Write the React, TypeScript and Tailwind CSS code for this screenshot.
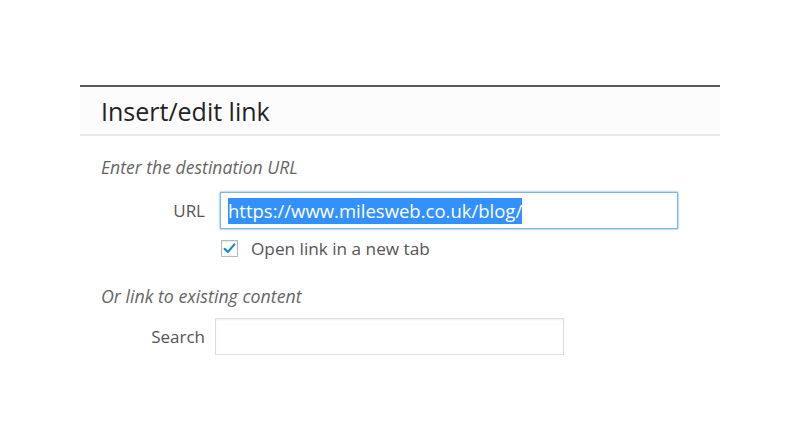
export default function App() {
  return (
    <div className="min-h-screen bg-white font-['Open_Sans',sans-serif]">
      <div className="pt-[85px] pl-[80px]">
        <div className="w-[640px] border-t-2 border-[#595959]">
          {/* Header */}
          <div className="h-[49px] bg-[#fcfcfc] border-b-2 border-[#e8e8e8] flex items-center pl-[21px]">
            <h1 className="text-[25px] font-medium text-[#1f2328] leading-none pt-[1px]">Insert/edit link</h1>
          </div>

          {/* Body */}
          <div className="pt-[19px]">
            <p className="pl-[21px] text-[17.6px] italic text-[#666] leading-6">Enter the destination URL</p>

            <div className="mt-[13px] flex items-center">
              <label className="w-[125px] text-right text-[17px] text-[#555] pt-[1px]">URL</label>
              <div className="ml-[15px] w-[458px] h-[37px] border border-[#7eb4ea] shadow-[0_0_2px_rgba(30,140,190,0.8)] flex items-center pl-[7px]">
                <span className="bg-[#3390ff] text-white text-[18.5px] leading-[26px]">https://www.milesweb.co.uk/blog/</span>
              </div>
            </div>

            <div className="mt-[7px] h-[24px] flex items-center pl-[141px]">
              <div className="w-[17px] h-[17px] border border-[#b4b9be] bg-white flex items-center justify-center shadow-[inset_0_1px_2px_rgba(0,0,0,0.1)]">
                <svg viewBox="0 0 20 20" className="w-[19px] h-[19px]">
                  <path d="M3.5 10.5 L8 14.5 L16.5 4.5" fill="none" stroke="#1e8cbe" strokeWidth="3" strokeLinecap="round" strokeLinejoin="round" />
                </svg>
              </div>
              <span className="ml-[13px] text-[17.2px] text-[#555] leading-6 pt-[2px]">Open link in a new tab</span>
            </div>

            <p className="mt-[24px] pl-[21px] text-[17.8px] italic text-[#666] leading-6">Or link to existing content</p>

            <div className="mt-[10px] flex items-center">
              <label className="w-[125px] text-right text-[17px] text-[#555] pt-[1px]">Search</label>
              <div className="ml-[10px] w-[349px] h-[37px] border border-[#dddddd] shadow-[inset_0_1px_2px_rgba(0,0,0,0.07)]" />
            </div>
          </div>
        </div>
      </div>
    </div>
  );
}
